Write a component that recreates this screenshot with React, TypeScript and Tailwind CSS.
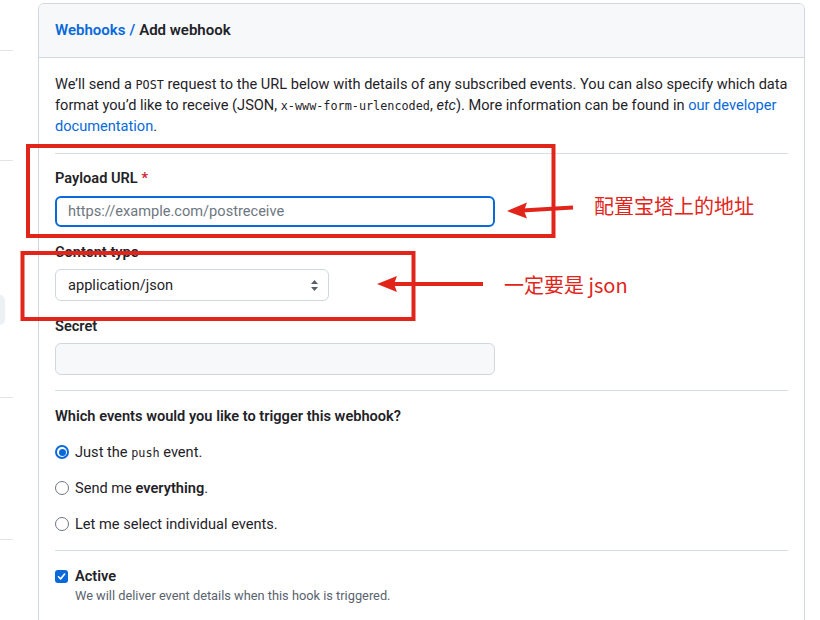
import React from "react";

const mono = "font-['DejaVu_Sans_Mono','Liberation_Mono',monospace] text-[11.8px] leading-none";

const Radio = ({ checked }: { checked?: boolean }) =>
  checked ? (
    <span className="w-[14px] h-[14px] rounded-full bg-[#0969da] flex items-center justify-center shrink-0">
      <span className="w-[10px] h-[10px] rounded-full bg-white flex items-center justify-center">
        <span className="w-[7px] h-[7px] rounded-full bg-[#0969da]" />
      </span>
    </span>
  ) : (
    <span className="w-[14px] h-[14px] rounded-full border border-[#6e7781] bg-white shrink-0" />
  );

export default function App() {
  return (
    <div
      className="relative w-[820px] h-[620px] overflow-hidden bg-white text-[#1f2328]"
      style={{ fontFamily: "Roboto, 'Noto Sans', 'Liberation Sans', sans-serif" }}
    >
      <div className="flex items-start">
        {/* sidebar stub */}
        <div className="w-[13px] shrink-0 flex flex-col">
          <div className="h-[51px] border-b border-[#e1e4e8]" />
          <div className="h-[110px] border-b border-[#e1e4e8]" />
          <div className="h-[134px]" />
          <div className="h-[30px] w-[5px] bg-[#eef1f4] rounded-r-md" />
          <div className="h-[73px] border-b border-[#e1e4e8]" />
          <div className="h-[142px] border-b border-[#e1e4e8]" />
        </div>

        {/* card */}
        <div className="ml-[25px] mt-[3px] w-[767px] h-[640px] border border-[#d0d7de] rounded-md overflow-hidden">
          <div className="h-[54px] bg-[#f6f8fa] border-b border-[#d0d7de] px-4 flex items-center text-[15px] font-semibold">
            <span className="text-[#0969da]">Webhooks</span>
            <span className="text-[#0969da] mx-[4px]">/</span>
            <span>Add webhook</span>
          </div>
          <div className="px-4 pt-4 text-[14.6px] leading-[21px]">
            <p>
              We’ll send a <code className={mono}>POST</code> request to the URL below with details of any subscribed
              events. You can also specify which data format you’d like to receive (JSON,{" "}
              <code className={mono}>x-www-form-urlencoded</code>, <em>etc</em>). More information can be found in{" "}
              <span className="text-[#0969da]">our developer documentation</span>.
            </p>

            <div className="mt-4 border-t border-[#d8dee4]" />

            <div className="mt-[14px] font-semibold">
              Payload URL <span className="text-[#cf222e]">*</span>
            </div>
            <div className="mt-[7px] w-[440px] h-[31px] rounded-md border-2 border-[#0969da] flex items-center pl-[11px] text-[#6e7781]">
              https://example.com/postreceive
            </div>

            <div className="mt-[15px] font-semibold">Content type</div>
            <div className="mt-[6px] w-[274px] h-[32px] rounded-md border border-[#d0d7de] bg-white flex items-center pl-[12px] pr-[9px] justify-between">
              <span>application/json</span>
              <svg width="9" height="13" viewBox="0 0 9 13">
                <path d="M4.5 1 L8 5 L1 5 Z" fill="#57606a" />
                <path d="M4.5 12 L8 8 L1 8 Z" fill="#57606a" />
              </svg>
            </div>

            <div className="mt-[15px] font-semibold">Secret</div>
            <div className="mt-[6px] w-[440px] h-[32px] rounded-md border border-[#d0d7de] bg-[#f6f8fa]" />

            <div className="mt-[15px] border-t border-[#d8dee4]" />

            <div className="mt-[15px] font-semibold">Which events would you like to trigger this webhook?</div>

            <div className="mt-[7px] flex flex-col">
              <div className="h-[36px] flex items-center gap-[6px]">
                <Radio checked />
                <span>
                  Just the <code className={mono}>push</code> event.
                </span>
              </div>
              <div className="h-[36px] flex items-center gap-[6px]">
                <Radio />
                <span>
                  Send me <strong className="font-semibold">everything</strong>.
                </span>
              </div>
              <div className="h-[36px] flex items-center gap-[6px]">
                <Radio />
                <span>Let me select individual events.</span>
              </div>
            </div>

            <div className="mt-[8px] border-t border-[#d8dee4]" />

            <div className="mt-[15px] flex items-center gap-[7px]">
              <span className="w-[13px] h-[13px] rounded-[3px] bg-[#0969da] flex items-center justify-center shrink-0">
                <svg width="9" height="9" viewBox="0 0 9 9">
                  <path d="M1.5 4.8 L3.6 6.9 L7.6 2" stroke="white" strokeWidth="1.6" fill="none" strokeLinecap="round" strokeLinejoin="round" />
                </svg>
              </span>
              <span className="font-semibold">Active</span>
            </div>
            <div className="pl-[20px] text-[12.8px] leading-[18px] text-[#59636e]">
              We will deliver event details when this hook is triggered.
            </div>
          </div>
        </div>
      </div>

      {/* annotations */}
      <svg className="absolute inset-0 pointer-events-none" width="820" height="620" viewBox="0 0 820 620">
        <rect x="28" y="146" width="525.5" height="90" fill="none" stroke="#e1251b" strokeWidth="4" />
        <rect x="22.5" y="253" width="391" height="66" fill="none" stroke="#e1251b" strokeWidth="4" />
        <line x1="573" y1="207.5" x2="522" y2="210.5" stroke="#e1251b" strokeWidth="4" />
        <path d="M507 211 L527 202.5 L524 210.8 L527 218.5 Z" fill="#e1251b" />
        <line x1="483" y1="284" x2="392" y2="284" stroke="#e1251b" strokeWidth="4" />
        <path d="M377 284 L397 276 L394 284 L397 292 Z" fill="#e1251b" />
      </svg>
      <div
        className="absolute left-[594px] top-[193px] text-[20px] leading-[26px] text-[#e1251b]"
        style={{ fontFamily: "'Noto Sans CJK SC', sans-serif" }}
      >
        配置宝塔上的地址
      </div>
      <div
        className="absolute left-[504px] top-[272px] text-[20px] leading-[26px] text-[#e1251b]"
        style={{ fontFamily: "'Noto Sans CJK SC', sans-serif" }}
      >
        一定要是 json
      </div>
    </div>
  );
}
